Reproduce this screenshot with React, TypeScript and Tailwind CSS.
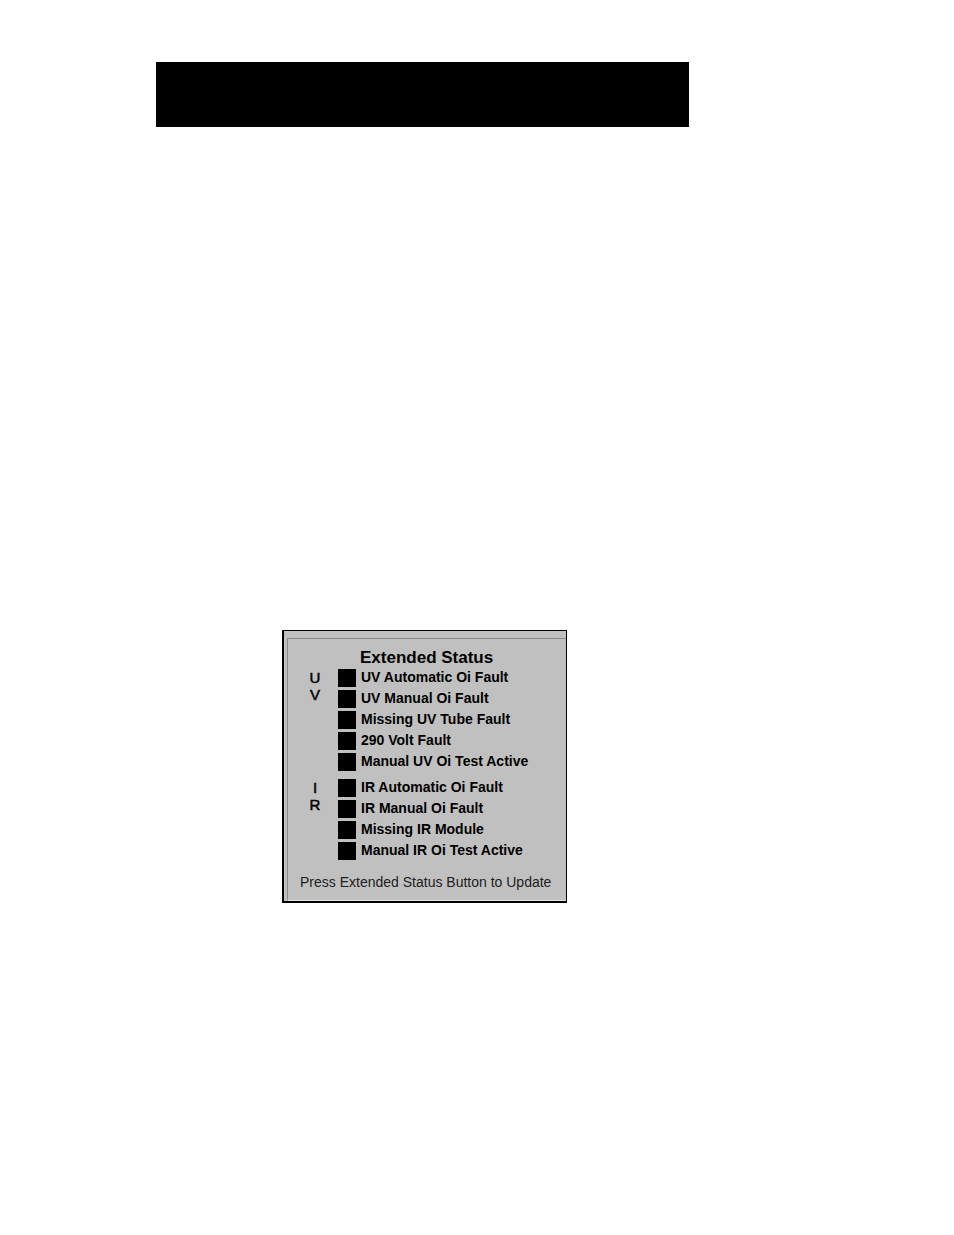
interface StatusGroupProps {
  letters: string[];
  items: string[];
}

const uvItems = [
  'UV Automatic Oi Fault',
  'UV Manual Oi Fault',
  'Missing UV Tube Fault',
  '290 Volt Fault',
  'Manual UV Oi Test Active',
];

const irItems = [
  'IR Automatic Oi Fault',
  'IR Manual Oi Fault',
  'Missing IR Module',
  'Manual IR Oi Test Active',
];

function StatusGroup({ letters, items }: StatusGroupProps) {
  return (
    <section className="flex">
      <h3 className="flex flex-col items-center w-4 ml-[19px] mr-[15px] text-[15px] leading-[17px] font-normal pt-[2px] [-webkit-text-stroke:0.5px_black]">
        {letters.map((letter) => (
          <span key={letter}>{letter}</span>
        ))}
      </h3>
      <ul>
        {items.map((item) => (
          <li key={item} className="flex items-center h-[21px] gap-[5px]">
            <span className="w-[18px] h-[18px] bg-black"></span>
            <span className="pb-px text-sm font-bold leading-5 whitespace-nowrap">{item}</span>
          </li>
        ))}
      </ul>
    </section>
  );
}

export default function App() {
  return (
    <main className="min-h-screen pt-[62px] pl-[156px] pr-[265px] bg-white text-black font-['Liberation_Sans',Arial,sans-serif]">
      <header className="h-[65px] bg-black"></header>
      <div className="mt-[503px] ml-[126px] w-[285px] border-t border-r border-b-2 border-l-2 border-black bg-[#c0c0c0] pt-[7px] pl-[3px]">
        <div className="border-t border-l border-t-[#8a8a8a] border-l-[#8a8a8a] border-b border-b-[#e4e4e4] pt-[9px] pb-[8px]">
          <h2 className="pl-[72px] text-[17px] font-bold leading-[19px] whitespace-nowrap">Extended Status</h2>
          <div className="flex flex-col gap-[5px]">
            <StatusGroup letters={['U', 'V']} items={uvItems} />
            <StatusGroup letters={['I', 'R']} items={irItems} />
          </div>
          <p className="mt-[11px] pl-3 text-sm leading-5 whitespace-nowrap text-[#202020]">
            Press Extended Status Button to Update
          </p>
        </div>
      </div>
    </main>
  );
}
